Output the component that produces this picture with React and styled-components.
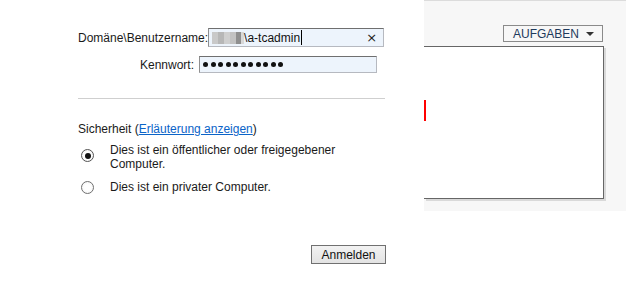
import styled, { createGlobalStyle } from "styled-components";

const GlobalStyle = createGlobalStyle`
	html, body {
		margin: 0;
		padding: 0;
		background: #ffffff;
	}
	body {
		font-family: "Liberation Sans", Arial, sans-serif;
		font-size: 12px;
		color: #000;
	}
	#root {
		width: 626px;
		height: 281px;
		overflow: hidden;
	}
`;

const App = () => {
	return (
		<Page>
			<GlobalStyle />
			<Dialog>
				<Form>
					<FieldRow $indent={0} $gap={0}>
						<Label>Domäne\Benutzername:</Label>
						<TextBox $width={176} $height={19}>
							<Blurred />
							<span>\a-tcadmin</span>
							<Caret />
							<ClearMark>×</ClearMark>
						</TextBox>
					</FieldRow>
					<FieldRow $indent={62} $gap={5} $top={9}>
						<Label>Kennwort:</Label>
						<TextBox $width={178} $height={17}>
							<Dots>
								{Array.from({ length: 11 }).map((_, i) => (
									<Dot key={i} />
								))}
							</Dots>
						</TextBox>
					</FieldRow>
					<Divider />
					<SecurityLine>
						Sicherheit (<LinkText href="#">Erläuterung anzeigen</LinkText>)
					</SecurityLine>
					<RadioList>
						<Option>
							<Radio $checked />
							<OptionText>
								Dies ist ein öffentlicher oder freigegebener
								<br />
								Computer.
							</OptionText>
						</Option>
						<Option>
							<Radio />
							<OptionText>Dies ist ein privater Computer.</OptionText>
						</Option>
					</RadioList>
					<ButtonBar>
						<Button>Anmelden</Button>
					</ButtonBar>
				</Form>
			</Dialog>
			<Side>
				<TaskBar>
					<TaskButton>
						AUFGABEN
						<Arrow />
					</TaskButton>
				</TaskBar>
				<Panel>
					<Marker />
				</Panel>
			</Side>
		</Page>
	);
};

export default App;

const Page = styled.div`
	display: flex;
	width: 626px;
	height: 281px;
	align-items: flex-start;
`;

const Dialog = styled.div`
	width: 424px;
	height: 281px;
	flex-shrink: 0;
	box-sizing: border-box;
	padding: 28px 0 0 78px;
	background: #ffffff;
	position: relative;
	z-index: 1;
`;

const Form = styled.div`
	width: 308px;
	display: flex;
	flex-direction: column;
`;

const FieldRow = styled.div`
	display: flex;
	align-items: center;
	gap: ${(p) => p.$gap}px;
	padding-left: ${(p) => p.$indent}px;
	margin-top: ${(p) => p.$top || 0}px;
`;

const Label = styled.span`
	line-height: 14px;
	white-space: nowrap;
	color: #1a1a1a;
`;

const TextBox = styled.div`
	width: ${(p) => p.$width}px;
	height: ${(p) => p.$height}px;
	box-sizing: border-box;
	display: flex;
	align-items: center;
	padding-left: 3px;
	background: #edf4fc;
	border: 1px solid;
	border-color: #6f6f6f #b6b9c0 #b6b9c0 #8f8f8f;
	line-height: 14px;
	color: #111;
`;

const Blurred = styled.span`
	width: 32px;
	height: 12px;
	background: linear-gradient(
		90deg,
		#c9c9c9 0 6px,
		#b7b7b7 6px 12px,
		#cfcfcf 12px 18px,
		#c2c2c2 18px 24px,
		#8f8f8f 24px 29px,
		#d8d8d8 29px 32px
	);
`;

const Caret = styled.span`
	width: 1px;
	height: 15px;
	background: #000;
	margin-left: 1px;
`;

const ClearMark = styled.span`
	margin-left: auto;
	margin-right: 6px;
	font-family: "DejaVu Sans", sans-serif;
	font-size: 13px;
	color: #222;
`;

const Dots = styled.div`
	display: flex;
	gap: 2.5px;
`;

const Dot = styled.span`
	width: 5px;
	height: 5px;
	border-radius: 50%;
	background: #111;
`;

const Divider = styled.div`
	height: 1px;
	background: #cfcfcf;
	margin-top: 25px;
	width: 307px;
`;

const SecurityLine = styled.div`
	margin-top: 23px;
	line-height: 14px;
	color: #1a1a1a;
`;

const LinkText = styled.a`
	color: #0b64c8;
	text-decoration: underline;
`;

const RadioList = styled.div`
	display: flex;
	flex-direction: column;
	gap: 9px;
	margin-top: 7px;
`;

const Option = styled.div`
	display: flex;
	align-items: center;
	padding-left: 3px;
	gap: 16px;
`;

const Radio = styled.span`
	width: 13px;
	height: 13px;
	flex-shrink: 0;
	box-sizing: border-box;
	border-radius: 50%;
	border: 1px solid ${(p) => (p.$checked ? "#555" : "#707070")};
	background: radial-gradient(circle, #ffffff 40%, #eeeeee 100%);
	display: flex;
	align-items: center;
	justify-content: center;
	margin-top: ${(p) => (p.$checked ? -3 : 0)}px;

	&::after {
		content: "";
		width: 6px;
		height: 6px;
		border-radius: 50%;
		background: ${(p) => (p.$checked ? "#111" : "transparent")};
	}
`;

const OptionText = styled.div`
	line-height: 14px;
	color: #1a1a1a;
`;

const ButtonBar = styled.div`
	display: flex;
	justify-content: flex-end;
	margin-top: 51px;
`;

const Button = styled.button`
	width: 75px;
	height: 19px;
	box-sizing: border-box;
	padding: 0;
	margin-right: 0;
	border: 1px solid #707070;
	background: linear-gradient(#f2f2f2, #e3e3e3);
	font-family: "Liberation Sans", Arial, sans-serif;
	font-size: 12px;
	color: #111;
`;

const Side = styled.div`
	flex: 1;
	height: 211px;
	box-sizing: border-box;
	border-top: 1px solid #dcdcdc;
	background: #f7f7f7;
	display: flex;
	flex-direction: column;
`;

const TaskBar = styled.div`
	display: flex;
	justify-content: flex-end;
	padding: 24px 23px 0 0;
`;

const TaskButton = styled.div`
	width: 100px;
	height: 17px;
	box-sizing: border-box;
	border: 1px solid #8a8a8a;
	display: flex;
	align-items: center;
	padding: 0 8px 0 9px;
	color: #1f3a5c;
	line-height: 14px;
`;

const Arrow = styled.span`
	margin-left: auto;
	width: 0;
	height: 0;
	border-left: 4px solid transparent;
	border-right: 4px solid transparent;
	border-top: 4px solid #333;
`;

const Panel = styled.div`
	margin: 4px 22px 0 0;
	height: 153px;
	box-sizing: border-box;
	background: #ffffff;
	border: 1px solid #666;
	border-left: none;
	border-right-width: 1.5px;
	border-bottom-width: 1.5px;
	box-shadow: 2px 2px 0 #d9d9d9;
	padding-top: 53px;
`;

const Marker = styled.div`
	width: 2px;
	height: 21px;
	background: #ff0000;
`;
